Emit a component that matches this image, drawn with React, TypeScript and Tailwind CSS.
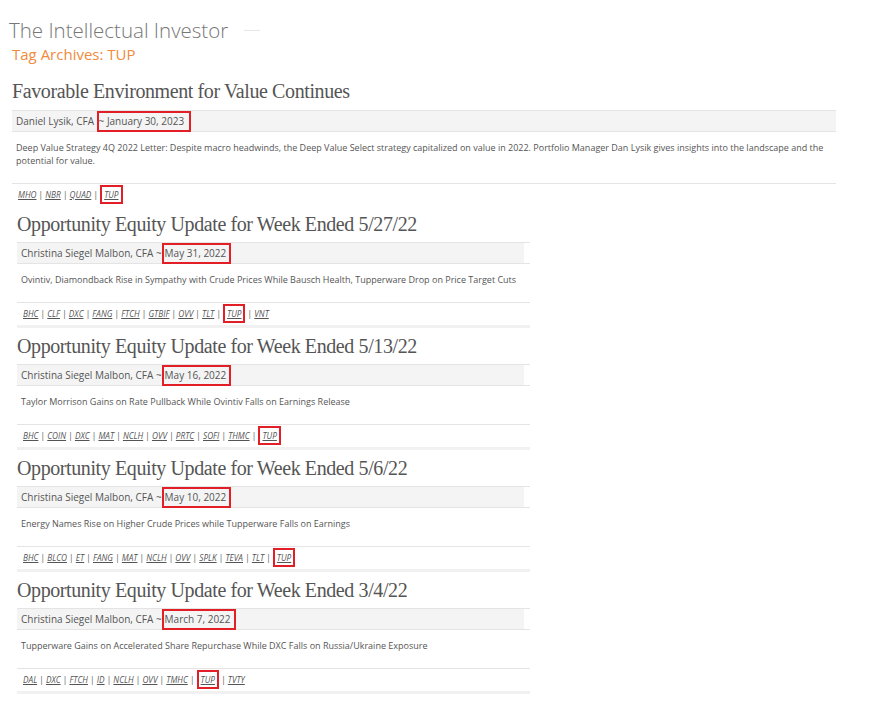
import type { ReactNode } from 'react'

type Post = {
  title: string
  author: string
  date: string
  excerpt: string
  tags: string[]
  wide?: boolean
}

const posts: Post[] = [
  {
    title: 'Favorable Environment for Value Continues',
    author: 'Daniel Lysik, CFA',
    date: 'January 30, 2023',
    excerpt:
      'Deep Value Strategy 4Q 2022 Letter: Despite macro headwinds, the Deep Value Select strategy capitalized on value in 2022. Portfolio Manager Dan Lysik gives insights into the landscape and the potential for value.',
    tags: ['MHO', 'NBR', 'QUAD', 'TUP'],
    wide: true,
  },
  {
    title: 'Opportunity Equity Update for Week Ended 5/27/22',
    author: 'Christina Siegel Malbon, CFA',
    date: 'May 31, 2022',
    excerpt: 'Ovintiv, Diamondback Rise in Sympathy with Crude Prices While Bausch Health, Tupperware Drop on Price Target Cuts',
    tags: ['BHC', 'CLF', 'DXC', 'FANG', 'FTCH', 'GTBIF', 'OVV', 'TLT', 'TUP', 'VNT'],
  },
  {
    title: 'Opportunity Equity Update for Week Ended 5/13/22',
    author: 'Christina Siegel Malbon, CFA',
    date: 'May 16, 2022',
    excerpt: 'Taylor Morrison Gains on Rate Pullback While Ovintiv Falls on Earnings Release',
    tags: ['BHC', 'COIN', 'DXC', 'MAT', 'NCLH', 'OVV', 'PRTC', 'SOFI', 'THMC', 'TUP'],
  },
  {
    title: 'Opportunity Equity Update for Week Ended 5/6/22',
    author: 'Christina Siegel Malbon, CFA',
    date: 'May 10, 2022',
    excerpt: 'Energy Names Rise on Higher Crude Prices while Tupperware Falls on Earnings',
    tags: ['BHC', 'BLCO', 'ET', 'FANG', 'MAT', 'NCLH', 'OVV', 'SPLK', 'TEVA', 'TLT', 'TUP'],
  },
  {
    title: 'Opportunity Equity Update for Week Ended 3/4/22',
    author: 'Christina Siegel Malbon, CFA',
    date: 'March 7, 2022',
    excerpt: 'Tupperware Gains on Accelerated Share Repurchase While DXC Falls on Russia/Ukraine Exposure',
    tags: ['DAL', 'DXC', 'FTCH', 'ID', 'NCLH', 'OVV', 'TMHC', 'TUP', 'TVTY'],
  },
]

function Marked({ children, className = '' }: { children: ReactNode; className?: string }) {
  return <span className={`border-2 border-[#e21f26] ${className}`}>{children}</span>
}

function PostBlock({ post }: { post: Post }) {
  const wide = post.wide

  return (
    <article className={wide ? 'ml-[12px] w-[824px]' : 'ml-[17px] mt-[3px] w-[513px]'}>
      <h2
        className={`font-['Liberation_Serif',serif] text-[20px] leading-[26px] tracking-[-0.4px] text-[#555] ${
          wide ? 'h-[32px] pt-0' : 'h-[33px] pt-[2px]'
        }`}
      >
        {post.title}
      </h2>

      <div className="border-y border-[#e4e4e4]">
        <div className={`flex h-[20px] items-center bg-[#f4f4f4] px-[4px] text-[10px] text-[#555] ${wide ? '' : 'mr-[6px]'}`}>
          <span className="whitespace-pre">{wide ? `${post.author} ` : `${post.author} ~`}</span>
          {wide ? (
            <Marked className="py-[1px] pr-[5px]">~ {post.date}</Marked>
          ) : (
            <Marked className="py-[1px] pl-[1px] pr-[3px]">{post.date}</Marked>
          )}
        </div>
      </div>

      <div className={`border-b border-[#e4e4e4] px-[4px] pt-[9px] text-[9px] leading-[13px] text-[#555] ${wide ? 'h-[52px]' : 'h-[39px]'}`}>
        {post.excerpt}
      </div>

      <div
        className={`flex items-center px-[6px] text-[8.25px] italic text-[#555] ${
          wide ? 'h-[22px]' : 'h-[25px] border-b-[3px] border-[#f1f1f1]'
        }`}
      >
        {post.tags.map((tag, i) => (
          <span key={tag} className="whitespace-pre">
            {i > 0 ? <span className="not-italic">{' | '}</span> : null}
            {tag === 'TUP' ? (
              <Marked className="px-[2px] py-[2px]">
                <span className="underline">{tag}</span>
              </Marked>
            ) : (
              <span className="underline">{tag}</span>
            )}
          </span>
        ))}
      </div>
    </article>
  )
}

export default function App() {
  return (
    <div className="min-h-[714px] w-[870px] bg-white font-['Open_Sans',sans-serif]">
      <header className="px-[9px] pt-[16px]">
        <div className="flex items-center">
          <h1 className="text-[20.5px] font-light leading-[28px] text-[#777]">The Intellectual Investor</h1>
          <div className="ml-[16px] h-px w-[16px] bg-[#e6e6e6]" />
        </div>
        <p className="ml-[3px] text-[15px] leading-[20px] text-[#f08a3c]">Tag Archives: TUP</p>
      </header>

      <main className="pt-[14px]">
        {posts.map((post) => (
          <PostBlock key={post.title} post={post} />
        ))}
      </main>
    </div>
  )
}
